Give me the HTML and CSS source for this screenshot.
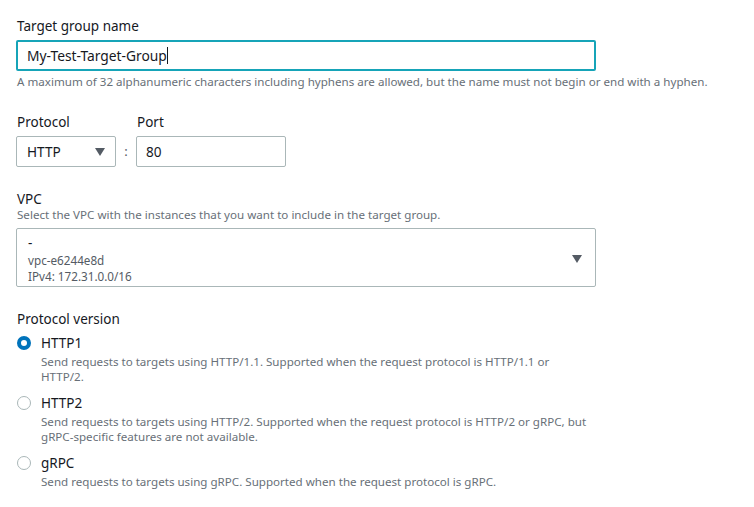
FILE: index.html
```html
<!DOCTYPE html>
<html>
<head>
<meta charset="utf-8">
<link rel="stylesheet" href="styles.css">
</head>
<body>
<div class="page">
  <div class="field">
    <div class="label">Target group name</div>
    <div class="input focused"><span class="val">My-Test-Target-Group</span><span class="cursor"></span></div>
    <div class="help">A maximum of 32 alphanumeric characters including hyphens are allowed, but the name must not begin or end with a hyphen.</div>
  </div>

  <div class="row-fields">
    <div class="col">
      <div class="label">Protocol</div>
      <div class="select small">
        <span class="val">HTTP</span>
        <span class="caret"></span>
      </div>
    </div>
    <div class="colon">:</div>
    <div class="col">
      <div class="label">Port</div>
      <div class="input port"><span class="val">80</span></div>
    </div>
  </div>

  <div class="field vpc-field">
    <div class="label">VPC</div>
    <div class="desc">Select the VPC with the instances that you want to include in the target group.</div>
    <div class="select vpc">
      <div class="vpc-text">
        <div class="vpc-name">-</div>
        <div class="vpc-sub">vpc-e6244e8d</div>
        <div class="vpc-sub">IPv4: 172.31.0.0/16</div>
      </div>
      <span class="caret"></span>
    </div>
  </div>

  <div class="field pv-field">
    <div class="label">Protocol version</div>
    <div class="radios">
      <div class="radio-row">
        <span class="radio checked"></span>
        <div class="radio-body">
          <div class="radio-label">HTTP1</div>
          <div class="radio-desc">Send requests to targets using HTTP/1.1. Supported when the request protocol is HTTP/1.1 or HTTP/2.</div>
        </div>
      </div>
      <div class="radio-row">
        <span class="radio"></span>
        <div class="radio-body">
          <div class="radio-label">HTTP2</div>
          <div class="radio-desc">Send requests to targets using HTTP/2. Supported when the request protocol is HTTP/2 or gRPC, but gRPC-specific features are not available.</div>
        </div>
      </div>
      <div class="radio-row">
        <span class="radio"></span>
        <div class="radio-body">
          <div class="radio-label">gRPC</div>
          <div class="radio-desc">Send requests to targets using gRPC. Supported when the request protocol is gRPC.</div>
        </div>
      </div>
    </div>
  </div>
</div>
</body>
</html>
```
FILE: styles.css
```css
* { box-sizing: border-box; }
html, body { margin: 0; padding: 0; background: #ffffff; }
body {
  font-family: "Noto Sans", "Open Sans", sans-serif;
  color: #16191f;
  font-size: 13.5px;
}
.page {
  padding: 16px 0 0 16px;
  width: 612px;
}
.label {
  font-size: 13.5px;
  line-height: 18px;
  padding-top: 1px;
  padding-left: 1px;
  color: #16191f;
}
.input, .select {
  margin-top: 5px;
  height: 31px;
  border: 1px solid #aab7b8;
  border-radius: 2px;
  display: flex;
  align-items: center;
  font-size: 13.6px;
  color: #16191f;
  background: #fff;
}
.input.focused {
  width: 580px;
  border: 2px solid #16a4b8;
  padding-left: 9px;
  font-size: 13.8px;
}
.input .val, .select .val { line-height: 18px; }
.cursor {
  display: inline-block;
  width: 1px;
  height: 17px;
  background: #16191f;
}
.help {
  margin-top: 4px;
  font-size: 11.6px;
  line-height: 14px;
  color: #687078;
  padding-left: 1px;
  white-space: nowrap;
}
.row-fields {
  margin-top: 23px;
  display: flex;
  align-items: flex-end;
}
.select.small {
  width: 100px;
  padding: 0 10px;
  justify-content: space-between;
}
.caret {
  width: 0;
  height: 0;
  border-left: 5.5px solid transparent;
  border-right: 5.5px solid transparent;
  border-top: 8px solid #545b64;
}
.colon {
  width: 20px;
  text-align: center;
  height: 31px;
  line-height: 31px;
  color: #545b64;
  font-size: 13px;
}
.input.port {
  width: 150px;
  padding-left: 9px;
}
.vpc-field { margin-top: 22px; }
.desc {
  margin-top: 0;
  font-size: 11.6px;
  line-height: 14px;
  color: #687078;
  padding-left: 1px;
}
.vpc-field .select.vpc { margin-top: 6px; }
.select.vpc {
  height: 59px;
  width: 580px;
  padding: 5px 13px 0 11px;
  justify-content: space-between;
  align-items: flex-start;
}
.vpc-text { display: flex; flex-direction: column; }
.vpc-name { font-size: 13.5px; line-height: 18px; }
.vpc-sub { font-size: 11.7px; line-height: 16px; color: #545b64; }
.select.vpc .caret { margin-top: 21px; }
.pv-field { margin-top: 22px; }
.radios {
  margin-top: 6px;
  display: flex;
  flex-direction: column;
  gap: 10px;
}
.radio-row {
  display: flex;
  align-items: flex-start;
}
.radio {
  flex: none;
  width: 14px;
  height: 14px;
  border-radius: 50%;
  border: 1px solid #aab7b8;
  margin-top: 2px;
  margin-left: 1px;
  margin-right: 10px;
  background: #fff;
}
.radio.checked {
  border: 4px solid #0073bb;
}
.radio-body { width: 549px; }
.radio-label {
  font-size: 13.5px;
  line-height: 18px;
}
.radio-desc {
  margin-top: 2px;
  font-size: 11.6px;
  line-height: 15px;
  color: #687078;
}
```
